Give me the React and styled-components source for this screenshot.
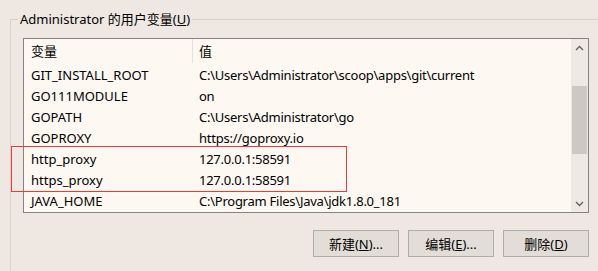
import styled, { createGlobalStyle } from 'styled-components';

const GlobalStyle = createGlobalStyle`
  html, body {
    margin: 0;
    padding: 0;
    background: #efe8e2;
  }
  body {
    font-family: "Noto Sans", "Noto Sans CJK SC", sans-serif;
    font-size: 13px;
    color: #000;
  }
`;

const rows = [
  ['GIT_INSTALL_ROOT', 'C:\\Users\\Administrator\\scoop\\apps\\git\\current'],
  ['GO111MODULE', 'on'],
  ['GOPATH', 'C:\\Users\\Administrator\\go'],
  ['GOPROXY', 'https://goproxy.io'],
  ['http_proxy', '127.0.0.1:58591'],
  ['https_proxy', '127.0.0.1:58591'],
  ['JAVA_HOME', 'C:\\Program Files\\Java\\jdk1.8.0_181'],
];

const App = () => {
  return (
    <>
      <GlobalStyle />
      <Page>
        <Group>
          <Legend>Administrator 的用户变量(<u>U</u>)</Legend>
          <ListBox>
            <Table>
              <Header>
                <HeadCell $w={161}>变量</HeadCell>
                <HeadCell>值</HeadCell>
              </Header>
              {rows.map(([name, value]) => (
                <Row key={name}>
                  <Cell $w={161}>{name}</Cell>
                  <Cell>{value}</Cell>
                </Row>
              ))}
            </Table>
            <ScrollBar>
              <Arrow>
                <svg width="9" height="6" viewBox="0 0 9 6">
                  <path d="M1 5 L4.5 1.5 L8 5" fill="none" stroke="#606060" strokeWidth="1.3" />
                </svg>
              </Arrow>
              <Track>
                <Thumb />
              </Track>
              <Arrow>
                <svg width="9" height="6" viewBox="0 0 9 6">
                  <path d="M1 1 L4.5 4.5 L8 1" fill="none" stroke="#606060" strokeWidth="1.3" />
                </svg>
              </Arrow>
            </ScrollBar>
          </ListBox>
          <Highlight />
        </Group>
        <Buttons>
          <Button>新建(<u>N</u>)...</Button>
          <Button>编辑(<u>E</u>)...</Button>
          <Button>删除(<u>D</u>)</Button>
        </Buttons>
      </Page>
    </>
  );
};

export default App;

const Page = styled.div`
  position: relative;
  width: 598px;
  height: 271px;
  overflow: hidden;
`;

const Group = styled.div`
  position: relative;
  margin: 19px 0 0 10px;
  height: 260px;
  border-left: 1px solid #d8d2cc;
  border-top: 1px solid #d8d2cc;
  padding: 18px 0 0 12px;
`;

const Legend = styled.div`
  position: absolute;
  top: -10px;
  left: 7px;
  padding: 0 2px;
  background: #efe8e2;
  line-height: 18px;
`;

const ListBox = styled.div`
  display: flex;
  width: 564px;
  height: 173px;
  border: 1px solid #838383;
  background: #fef8f3;
`;

const Table = styled.div`
  flex: 1;
  display: flex;
  flex-direction: column;
  padding-left: 7px;
`;

const Header = styled.div`
  display: flex;
  height: 24px;
  align-items: center;
  margin-bottom: 1px;
`;

const HeadCell = styled.div`
  width: ${p => (p.$w ? `${p.$w}px` : 'auto')};
  flex: ${p => (p.$w ? 'none' : '1')};
  height: 24px;
  line-height: 24px;
  border-right: ${p => (p.$w ? '1px solid #e6e0da' : 'none')};
  padding-left: ${p => (p.$w ? '0' : '6px')};
`;

const Row = styled.div`
  display: flex;
  height: 21px;
  align-items: center;
`;

const Cell = styled.div`
  width: ${p => (p.$w ? `${p.$w}px` : 'auto')};
  flex: ${p => (p.$w ? 'none' : '1')};
  white-space: nowrap;
  padding-left: ${p => (p.$w ? '0' : '7px')};
  letter-spacing: ${p => (p.$w ? '0' : '-0.25px')};
`;

const ScrollBar = styled.div`
  width: 17px;
  display: flex;
  flex-direction: column;
  background: #efe9e3;
`;

const Arrow = styled.div`
  height: 17px;
  display: flex;
  align-items: center;
  justify-content: center;
`;

const Track = styled.div`
  flex: 1;
  padding: 30px 1px 0 1px;
`;

const Thumb = styled.div`
  height: 68px;
  background: #cdc8c2;
`;

const Highlight = styled.div`
  position: absolute;
  left: 0;
  top: 126px;
  width: 336px;
  height: 46px;
  border: 1px solid #f03838;
  box-sizing: border-box;
`;

const Buttons = styled.div`
  position: absolute;
  top: 230px;
  right: 9px;
  display: flex;
  gap: 9px;
`;

const Button = styled.div`
  width: 84px;
  height: 25px;
  border: 1px solid #adadad;
  background: #e3ddd7;
  display: flex;
  align-items: center;
  justify-content: center;
  font-family: "Noto Sans", "Noto Sans CJK SC", sans-serif;
  font-size: 13px;
`;
